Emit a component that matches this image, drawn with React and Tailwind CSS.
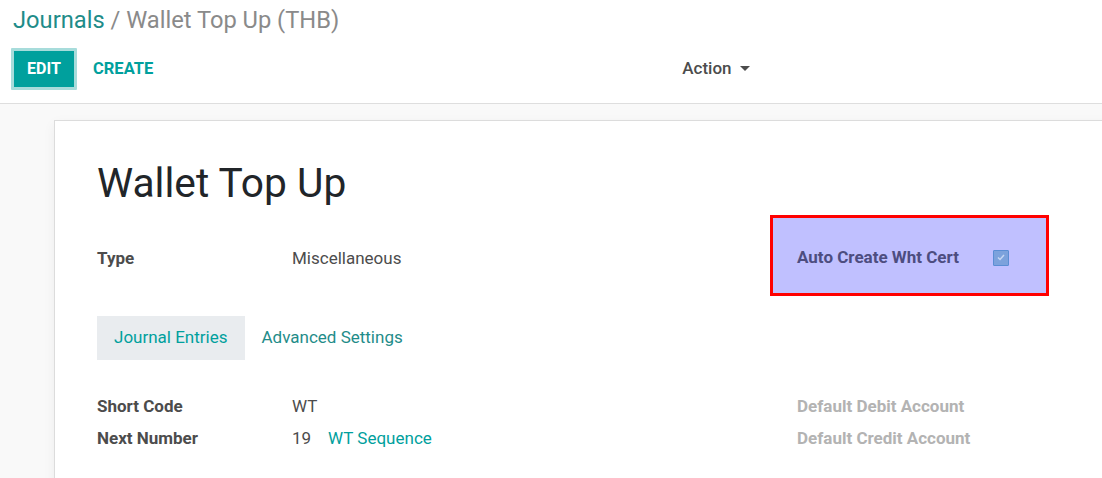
import React from "react";

const teal = "text-[#00A09D]";

const Field = ({ label, children, muted }) => (
  <div className="flex h-8 items-center">
    <div className={`w-[195px] font-bold ${muted ? "text-[#b3b3b3]" : "text-[#4c4c4c]"}`}>{label}</div>
    <div className="text-[#4c4c4c]">{children}</div>
  </div>
);

export default function App() {
  return (
    <div className="h-[478px] w-[1102px] overflow-hidden bg-[#f9f9f9] font-['Roboto',sans-serif] text-[17px]">
      {/* control panel */}
      <div className="h-[104px] border-b border-[#dedede] bg-white">
        <div className="pl-[13px] pt-[5px] text-[23.7px] leading-[30px]">
          <span className="text-[#1f8c89]">Journals</span>
          <span className="text-[#8a8a8a]"> / Wallet Top Up (THB)</span>
        </div>
        <div className="mt-[13px] flex items-center">
          <div className="ml-[11px] rounded-[1px] border-[3px] border-[#a7dcdb]">
            <button className="flex h-[36px] w-[60px] items-center justify-center bg-[#00A09D] text-[16px] font-bold text-white">
              EDIT
            </button>
          </div>
          <button className={`ml-[16px] text-[16.5px] font-bold ${teal}`}>CREATE</button>
          <div className="ml-[529px] flex items-center gap-2 text-[17px] text-[#4c4c4c]">
            <span className="font-medium">Action</span>
            <svg width="10" height="6" viewBox="0 0 10 6">
              <path d="M0 0h10L5 5z" fill="#4c4c4c" />
            </svg>
          </div>
        </div>
      </div>

      {/* sheet */}
      <div className="ml-[54px] mt-[16px] h-[400px] w-[1100px] border border-[#dcdcdc] bg-white shadow-[0_4px_12px_rgba(0,0,0,0.05)]">
        <div className="pl-[42px] pt-[34px]">
          <h1 className="text-[40.7px] leading-[56px] text-[#212529]">Wallet Top Up</h1>

          <div className="mt-[4px] flex">
            <div className="w-[673px] pt-[28px]">
              <Field label="Type">Miscellaneous</Field>
            </div>
            <div className="flex h-[81px] w-[279px] items-center border-[3px] border-[#f00] bg-[#c0c0ff] pl-[24px] pt-[4px]">
              <span className="font-bold text-[#4d4d80]">Auto Create Wht Cert</span>
              <span className="ml-[34px] flex h-[16px] w-[16px] items-center justify-center rounded-[1px] border border-[#5b8ed4] bg-[#7ca2dc]">
                <svg width="8" height="7" viewBox="0 0 8 7">
                  <path d="M1 3.5l2 2L7 1" stroke="#c5d6f3" strokeWidth="1.5" fill="none" />
                </svg>
              </span>
            </div>
          </div>

          <div className="mt-[20px] flex items-center">
            <div className={`flex h-[44px] items-center bg-[#e9ecef] px-[17px] ${teal}`}>Journal Entries</div>
            <div className="flex h-[44px] items-center px-[17px] text-[#1f8c89]">Advanced Settings</div>
          </div>

          <div className="mt-[31px] flex">
            <div className="w-[700px]">
              <Field label="Short Code">WT</Field>
              <Field label="Next Number">
                19<span className={`ml-[17px] ${teal}`}>WT Sequence</span>
              </Field>
            </div>
            <div>
              <Field label="Default Debit Account" muted />
              <Field label="Default Credit Account" muted />
            </div>
          </div>
        </div>
      </div>
    </div>
  );
}
